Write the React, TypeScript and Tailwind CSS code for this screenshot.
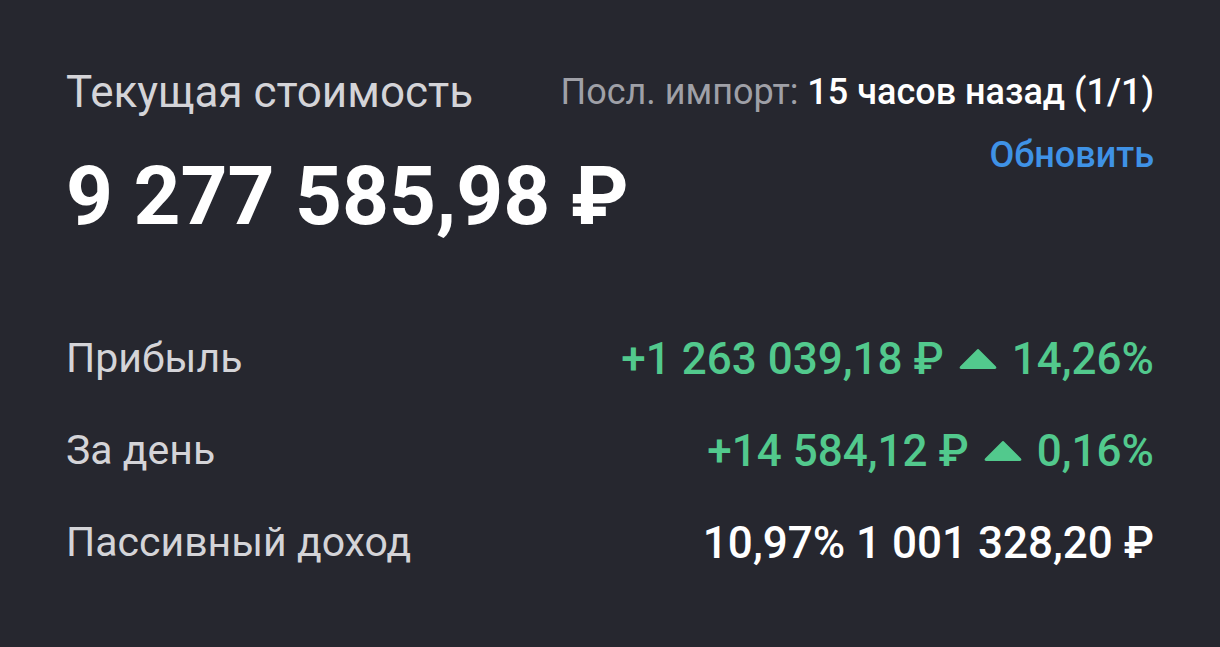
export default function App() {
  const Up = () => (
    <svg width="40" height="22" viewBox="0 0 40 22" className="mx-[14px] inline-block">
      <path d="M20 2 L37 19 Q38 20 36.5 20 L3.5 20 Q2 20 3 19 Z" fill="currentColor" stroke="currentColor" strokeWidth="2" strokeLinejoin="round" />
    </svg>
  );

  return (
    <div
      className="min-h-screen w-full whitespace-nowrap bg-[#26272f] px-[66px] pt-[66px] text-[#d4d4d8]"
      style={{ fontFamily: "Roboto, 'Noto Sans', sans-serif" }}
    >
      <div className="flex items-start justify-between">
        <div className="text-[44px] leading-[52px]">Текущая стоимость</div>
        <div className="text-[36px] leading-[52px] text-[#9fa0a7]">
          Посл. импорт: <span className="font-medium text-white">15 часов назад (1/1)</span>
        </div>
      </div>
      <div className="flex items-start justify-between">
        <div className="mt-[37px] text-[82px] font-bold leading-[82px] text-white">9 277 585,98 ₽</div>
        <button type="button" className="mt-[17px] text-[36px] font-medium leading-[40px] text-[#3f92e6]">
          Обновить
        </button>
      </div>

      <div className="mt-[76px]">
        <div className="flex h-[92px] items-center justify-between">
          <span className="text-[41px]">Прибыль</span>
          <span className="flex items-center text-[44px] font-medium text-[#52c98d]">
            +1 263 039,18 ₽<Up />14,26%
          </span>
        </div>
        <div className="flex h-[92px] items-center justify-between">
          <span className="text-[41px]">За день</span>
          <span className="flex items-center text-[44px] font-medium text-[#52c98d]">
            +14 584,12 ₽<Up />0,16%
          </span>
        </div>
        <div className="flex h-[92px] items-center justify-between">
          <span className="text-[41px]">Пассивный доход</span>
          <span className="text-[44px] font-medium text-white">10,97% 1 001 328,20 ₽</span>
        </div>
      </div>
    </div>
  );
}
